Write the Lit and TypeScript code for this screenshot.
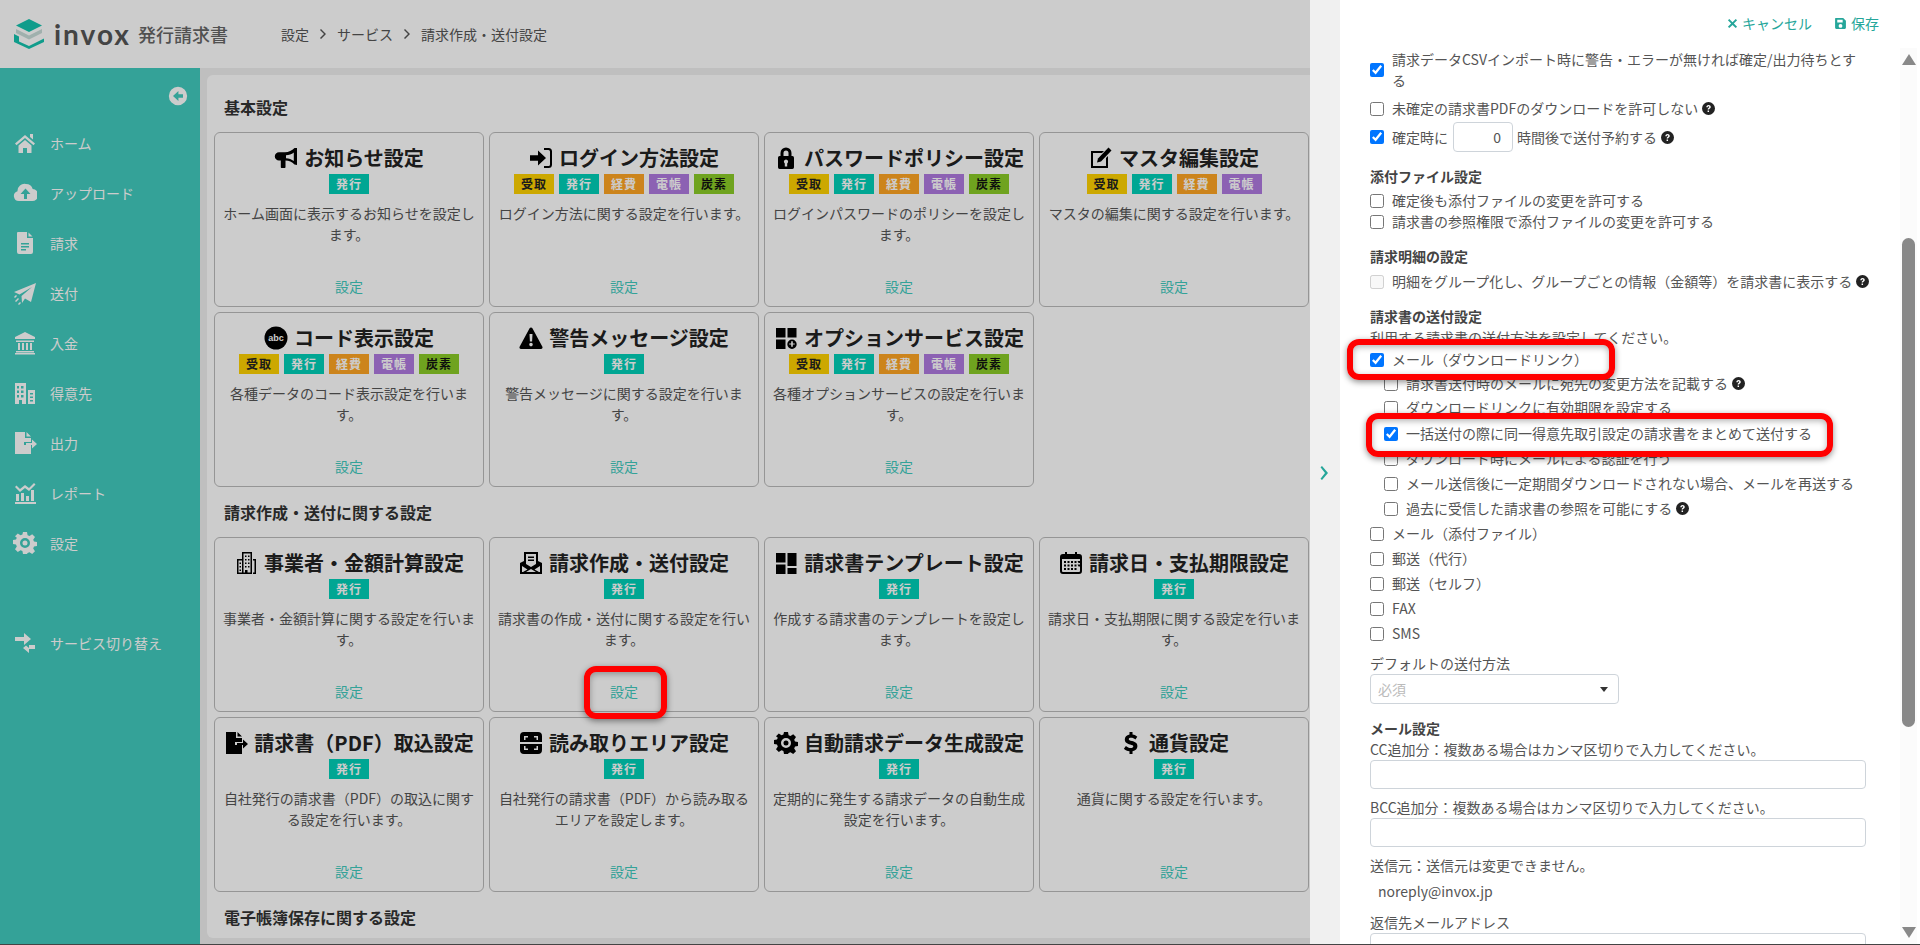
import { LitElement, html, css, svg } from "lit";
import { customElement } from "lit/decorators.js";

const P: Record<string, any> = {
  bullhorn: svg`<path fill-rule="evenodd" d="M23 2v17l-2.500-.5c-2.500-2.600-5.500-3.700-9-3.900V21c0 .6-.4 1-1 1H7.800c-.6 0-1-.4-1-1v-6.400H5a4.200 4.200 0 0 1 0-8.400h6c3.500 0 7-1.500 9.500-4.200zM19.800 6.500c-2.200 1.700-5 2.600-7.800 2.800v2.900c2.800.2 5.600 1.100 7.800 2.800z"/>`,
  signin: svg`<path d="M1 9.300h8V4.500L17 12l-8 7.500v-4.800H1z"/><path d="M15 2h4.500A3.500 3.500 0 0 1 23 5.500v13a3.500 3.500 0 0 1-3.500 3.500H15v-2h4.500a1.500 1.500 0 0 0 1.500-1.500v-13A1.500 1.500 0 0 0 19.500 4H15z"/>`,
  lock: svg`<path fill-rule="evenodd" d="M6.500 10V7a5.500 5.500 0 0 1 11 0v3h.5A1.800 1.800 0 0 1 20 11.800v9.400A1.800 1.800 0 0 1 18 23H6a1.800 1.800 0 0 1-2-1.800v-9.400A1.800 1.800 0 0 1 6 10zm3 0h5V7a2.500 2.500 0 0 0-5 0zM12 13.500a2.200 2.200 0 0 0-1.200 4v3h2.400v-3a2.200 2.200 0 0 0-1.200-4z"/>`,
  edit: svg`<path d="M2 5h13l-2 2H4v13h13v-8l2-2v12H2z"/><path d="M19.500 1.500l3 3L12 15.500l-4 1 1-4z"/>`,
  warn: svg`<path fill-rule="evenodd" d="M12 1.500c.6 0 1.100.3 1.400.8l10 18.500c.5 1-.2 2.200-1.400 2.200H2c-1.200 0-1.900-1.200-1.400-2.200l10-18.500c.3-.5.8-.8 1.400-.8zM10.500 8l.4 7.500h2.200l.4-7.500zM12 16.800a1.800 1.800 0 1 0 0 3.600 1.800 1.800 0 0 0 0-3.600z"/>`,
  option: svg`<rect x="2" y="2" width="9.500" height="9.500"/><rect x="13.500" y="2" width="9" height="9.500"/><rect x="2" y="13.500" width="9.500" height="9.500"/><path fill-rule="evenodd" d="M18 13.500a4.700 4.700 0 1 1 0 9.400 4.700 4.700 0 0 1 0-9.400zm-.8 1.800v2.100h-2v1.200h2v2.100h1.600v-2.100h2v-1.200h-2v-2.100z"/>`,
  building: svg`<path fill-rule="evenodd" d="M8 1h10v22H3V8h5zm1.500 1.500v19h1.500v-2.500h2.500v2.500h3v-19zM11 4.500h1.500V6H11zm3 0h1.500V6H14zM11 8h1.500v1.500H11zm3 0h1.500v1.500H14zm-3 3.500h1.500V13H11zm3 0h1.500V13H14zM11 15h1.500v1.500H11zm3 0h1.500v1.500H14zM4.500 9.500v12H8v-12zm1 2h1.500V13H5.500zm0 3.500h1.500v1.500H5.500zm0 3.500h1.500V20H5.500zM19 8h3v15h-3v-1.500h1.500v-12H19z"/>`,
  envelope: svg`<path fill-rule="evenodd" d="M5 1h14v9l4 2v11H1V12l4-2zm2 2v10l5 3 5-3V3zm2 2.500h6V7H9zm0 3h6V10H9zM3 15v6h18v-6l-5.500 3.500L20 21h-3l-5-3-5 3H4l4.500-2.500z"/>`,
  template: svg`<rect x="2" y="2" width="9.500" height="9.500"/><rect x="13.500" y="2" width="9" height="13"/><rect x="2" y="13.500" width="9.500" height="9.500"/><rect x="13.500" y="17" width="9" height="6"/>`,
  calendar: svg`<path fill-rule="evenodd" d="M6 1h2v2h8V1h2v2h2a3 3 0 0 1 3 3v14a3 3 0 0 1-3 3H4a3 3 0 0 1-3-3V6a3 3 0 0 1 3-3h2zM3 8v12a1 1 0 0 0 1 1h16a1 1 0 0 0 1-1V8zm2 2h2v2H5zm3.500 0h2v2h-2zm3.500 0h2v2h-2zm3.500 0h2v2h-2zm3 0H21v2h-1.500zM5 13.500h2v2H5zm3.500 0h2v2h-2zm3.500 0h2v2h-2zm3.500 0h2v2h-2zm3 0H21v2h-1.500zM5 17h2v2H5zm3.500 0h2v2h-2zm3.500 0h2v2h-2zm3.500 0h2v2h-2z"/>`,
  fileexp: svg`<path d="M2 1h10v6h6v4h-7v3h7v9H2z"/><path d="M13.500 1l4.500 4.500h-4.500zM13 12h6V8.500l5 4.500-5 4.500V14h-6z"/>`,
  scan: svg`<path fill-rule="evenodd" d="M5 1h14a4 4 0 0 1 4 4v14a4 4 0 0 1-4 4H5a4 4 0 0 1-4-4V5a4 4 0 0 1 4-4zM5 5v4h1.500V6.500H9V5zm10 0v1.500h2.500V9H19V5zM5 15v4h4v-1.500H6.500V15zm12.500 0v2.500H15V19h4v-4zM1 11v2h22v-2z"/>`,
  gear: svg`<path fill-rule="evenodd" d="M10 1h4l.6 3.200 1.900.8 2.700-1.800 2.800 2.800-1.800 2.700.8 1.900 3 .4v4l-3 .6-.8 1.900 1.800 2.700-2.800 2.800-2.700-1.800-1.900.8L14 23h-4l-.6-3-1.900-.8-2.700 1.800L2 18.200l1.800-2.700-.8-1.900-3-.6v-4l3-.4.8-1.900L2 5.300 4.800 2.500l2.700 1.800 1.900-.8zM12 7a5 5 0 1 0 0 10 5 5 0 0 0 0-10zm0 2.500a2.500 2.500 0 1 1 0 5 2.500 2.500 0 0 1 0-5z"/>`,
  home: svg`<path d="M12 4l10 8.500-1.500 1.700L12 7 3.500 14.200 2 12.500z"/><path d="M5.500 14.500L12 9l6.500 5.500V22H14v-5h-4v5H5.500z"/><path d="M17 3h3v5.500l-3-2.500z"/>`,
  cloud: svg`<path fill-rule="evenodd" d="M13 3a7 7 0 0 1 6.700 5 6 6 0 0 1-.7 12H6a5 5 0 0 1-1.500-9.800A7 7 0 0 1 13 3zm-.500 4.500L7.500 13H11v5h3v-5h3.500z"/>`,
  file: svg`<path fill-rule="evenodd" d="M5 1h9v6h6v14a2 2 0 0 1-2 2H6a2 2 0 0 1-2-2V2a1 1 0 0 1 1-1zm3 11v1.500h8V12zm0 3v1.500h8V15zm0 3v1.500h5V18zM15.500 1.500l4 4h-4z"/>`,
  plane: svg`<path d="M23 2L18 21l-6-3.500-3 4.500-.5-7L19 6 6.500 13.500 1 11z"/><path d="M2 20l3-3 1 1-3 3zM1 16l2-2 1 1-2 2zM5 23l2-2 1 1-2 2z"/>`,
  bank: svg`<path d="M12 1l10 5v2H2V6zM3 9.500h18V11H3zM5 12h2v7H5zm4 0h2v7H9zm4 0h2v7h-2zm4 0h2v7h-2zM3 20h18v1.500H3zM2 22h20v1.500H2z"/>`,
  clients: svg`<path fill-rule="evenodd" d="M2 2h11v21H9v-4H6v4H2zm2 3v2.500h2V5zm4 0v2.500h2.500V5zM4 9.500V12h2V9.500zm4 0V12h2.500V9.500zM4 14v2.500h2V14zm4 0v2.500h2.500V14zM15 9h7v14h-7zm2 3v1.500h3V12zm0 3.500V17h3v-1.500zm0 3.500v1.500h3V19z"/>`,
  chart: svg`<path d="M2 21h21v2H2zM3 13h3v7H3zm5-1h3v8H8zm5 3h3v5h-3zm5-6h3v11h-3zM2 6l1.500-1.500L7 8l5-4 4 3 5-5 1.500 1.500L16 10l-4-3-5 4z"/>`,
  swap: svg`<path d="M2 6h9V2l7 6-7 6v-4H2zM22 14v4h-6v4l-6-5 3-2.500 3 2.500v-3z"/>`,
  save: svg`<path fill-rule="evenodd" d="M3 2h14l5 5v13a2 2 0 0 1-2 2H4a2 2 0 0 1-2-2V3a1 1 0 0 1 1-1zm3 3v5h10V5zm6 8a3.500 3.500 0 1 0 0 7 3.500 3.500 0 0 0 0-7z"/>`,
  times: svg`<path d="M5 2l7 7 7-7 3 3-7 7 7 7-3 3-7-7-7 7-3-3 7-7-7-7z"/>`,
  back: svg`<path fill-rule="evenodd" d="M12 1a11 11 0 1 1 0 22 11 11 0 0 1 0-22zm.500 5L6 12l6.500 6v-4H18v-4h-5.500z"/>`,
  abc: svg`<circle cx="12" cy="12" r="11.500"/><text x="12" y="15" text-anchor="middle" font-size="9" font-family="Liberation Sans, sans-serif" fill="#fff">abc</text>`,
  dollar: svg`<path d="M10.500 1h3v2.600c2 .3 3.600 1.100 4.800 2.100l-1.900 2.700c-1.300-1-2.800-1.600-4.300-1.600-1.500 0-2.300.5-2.300 1.400 0 1 1 1.300 3.200 1.900 3 .8 5.400 2 5.400 5.100 0 2.600-1.800 4.500-4.900 5v2.800h-3v-2.700c-2.200-.3-4.300-1.300-5.600-2.600l2-2.700c1.400 1.200 3.100 2.100 4.900 2.100 1.600 0 2.500-.6 2.500-1.500 0-1-1-1.400-3.200-2-3-.8-5.300-2-5.300-5 0-2.500 1.700-4.400 4.700-5z"/>`,
};

const ic = (n: string, cls = "") =>
  html`<svg class=${cls} viewBox="0 0 24 24" fill="currentColor" aria-hidden="true">${P[n]}</svg>`;

const ALL = ["受取", "発行", "経費", "電帳", "炭素"];
const BCLS: Record<string, string> = { 受取: "b-y", 発行: "b-t", 経費: "b-o", 電帳: "b-p", 炭素: "b-g" };
const I = ["発行"];

const SECTIONS = [
  {
    title: "基本設定",
    cards: [
      ["bullhorn", "お知らせ設定", I, "ホーム画面に表示するお知らせを設定します。"],
      ["signin", "ログイン方法設定", ALL, "ログイン方法に関する設定を行います。"],
      ["lock", "パスワードポリシー設定", ALL, "ログインパスワードのポリシーを設定します。"],
      ["edit", "マスタ編集設定", ["受取", "発行", "経費", "電帳"], "マスタの編集に関する設定を行います。"],
      ["abc", "コード表示設定", ALL, "各種データのコード表示設定を行います。"],
      ["warn", "警告メッセージ設定", I, "警告メッセージに関する設定を行います。"],
      ["option", "オプションサービス設定", ALL, "各種オプションサービスの設定を行います。"],
    ],
  },
  {
    title: "請求作成・送付に関する設定",
    cards: [
      ["building", "事業者・金額計算設定", I, "事業者・金額計算に関する設定を行います。"],
      ["envelope", "請求作成・送付設定", I, "請求書の作成・送付に関する設定を行います。"],
      ["template", "請求書テンプレート設定", I, "作成する請求書のテンプレートを設定します。"],
      ["calendar", "請求日・支払期限設定", I, "請求日・支払期限に関する設定を行います。"],
      ["fileexp", "請求書（PDF）取込設定", I, "自社発行の請求書（PDF）の取込に関する設定を行います。"],
      ["scan", "読み取りエリア設定", I, "自社発行の請求書（PDF）から読み取るエリアを設定します。"],
      ["gear", "自動請求データ生成設定", I, "定期的に発生する請求データの自動生成設定を行います。"],
      ["dollar", "通貨設定", I, "通貨に関する設定を行います。"],
    ],
  },
] as const;

const NAV = [
  ["home", "ホーム"],
  ["cloud", "アップロード"],
  ["file", "請求"],
  ["plane", "送付"],
  ["bank", "入金"],
  ["clients", "得意先"],
  ["fileexp", "出力"],
  ["chart", "レポート"],
  ["gear", "設定"],
];

@customElement("app-root")
export class AppRoot extends LitElement {
  static styles = css`
    :host {
      display: flex;
      position: relative;
      width: 1920px;
      height: 945px;
      overflow: hidden;
      font-family: "Noto Sans CJK JP", "Open Sans", sans-serif;
      font-size: 14px;
      line-height: 21px;
      color: #555;
      background: #fff;
      box-sizing: border-box;
      border-bottom: 1px solid #444;
    }
    * { box-sizing: border-box; }
    .left { width: 1310px; flex: none; display: flex; flex-direction: column; position: relative; }
    .scrim { position: absolute; inset: 0; background: rgba(0, 0, 0, 0.2); z-index: 2; }
    header { height: 68px; flex: none; background: #fff; display: flex; align-items: center; padding-left: 14px; }
    .logo-mark { width: 30px; height: 30px; flex: none; }
    .logo-word { margin-left: 10px; font-family: "Lato", sans-serif; font-weight: 700; font-size: 28px; letter-spacing: 2px; color: #555; line-height: 30px; }
    .logo-sub { margin-left: 7px; font-size: 18px; color: #666; font-weight: 500; }
    .crumbs { margin-left: 53px; display: flex; align-items: center; gap: 11px; color: #555; }
    .crumbs svg { width: 6px; height: 10px; }
    .below { flex: 1; display: flex; min-height: 0; }
    .side { width: 200px; flex: none; background: #42cbbe; color: #fff; position: relative; padding-top: 50px; }
    .toggle { position: absolute; right: 12px; top: 18px; width: 20px; height: 20px; }
    .nav { display: flex; align-items: center; height: 50px; padding-left: 13px; }
    .nav svg { width: 24px; height: 24px; flex: none; }
    .nav span { margin-left: 13px; }
    .nav.switch { margin-top: 50px; }
    main { flex: 1; background: #efefef; padding: 7px 0 6px 7px; min-width: 0; }
    .sheet { height: 100%; background: #fff; border-radius: 6px 0 0 6px; padding: 0 0 0 7px; overflow: hidden; }
    h2 { margin: 0; font-size: 16px; font-weight: 700; line-height: 24px; color: #333; padding-left: 10px; }
    h2.s0 { padding-top: 20px; padding-bottom: 13px; }
    h2.s1 { padding-top: 13px; padding-bottom: 13px; }
    .grid { display: grid; grid-template-columns: repeat(4, 270px); grid-auto-rows: 175px; gap: 5px; }
    .card { border: 1px solid #bbb; border-radius: 6px; display: flex; flex-direction: column; align-items: center; padding: 9px 7px 9px; text-align: center; }
    .title { display: flex; align-items: center; justify-content: center; gap: 6px; font-size: 20px; font-weight: 700; line-height: 31px; color: #222; white-space: nowrap; height: 31px; }
    .title svg { width: 24px; height: 24px; flex: none; color: #000; }
    .badges { display: flex; gap: 5px; justify-content: center; margin-top: 1px; }
    .badge { width: 40px; height: 20px; font-size: 12px; font-weight: 700; line-height: 20px; letter-spacing: 1px; text-align: center; }
    .b-y { background: #ffd200; color: #222; }
    .b-t { background: #00d0b8; color: #fff; }
    .b-o { background: #ffa623; color: #fff; }
    .b-p { background: #af7ae0; color: #fff; }
    .b-g { background: #8bcc27; color: #111; }
    .desc { margin-top: 9px; color: #555; width: 100%; }
    .link { margin-top: auto; color: #42cbbe; }
    .strip { width: 30px; flex: none; background: #f0f0f0; display: flex; align-items: center; justify-content: center; padding-top: 1px; color: #26a69a; }
    .strip svg { width: 10px; height: 14px; }
    .panel { flex: 1; display: flex; flex-direction: column; min-width: 0; background: #fff; }
    .actions { height: 48px; flex: none; display: flex; justify-content: flex-end; align-items: flex-start; padding: 13px 41px 0 0; gap: 22px; color: #26a69a; }
    .act { display: flex; align-items: center; gap: 4px; }
    .act svg { width: 11px; height: 11px; }
    .act .sv { width: 13px; height: 13px; }
    .rest { flex: 1; display: flex; min-height: 0; }
    form { flex: 1; overflow: hidden; padding: 1px 0 0 30px; }
    .inner { width: 496px; }
    .chk { display: flex; align-items: center; white-space: nowrap; }
    .chk.wrap { white-space: normal; }
    .chk input { width: 14px; height: 14px; margin: 0 8px 0 0; flex: none; }
    .chk.sub { margin-left: 14px; }
    .q { width: 13px; height: 13px; margin-left: 4px; flex: none; }
    .hd { font-weight: 700; color: #444; }
    .m1 { margin-top: 1px; } .m3 { margin-top: 3px; } .m4 { margin-top: 4px; }
    .m5 { margin-top: 5px; } .m7 { margin-top: 7px; } .m8 { margin-top: 8px; } .m9 { margin-top: 9px; }
    .m10 { margin-top: 10px; } .m14 { margin-top: 14px; }
    .chk input.num { width: 60px; height: 30px; margin: 0 4px 0 5px; padding: 0 11px; border: 1px solid #ced4da; border-radius: 4px; text-align: right; font: inherit; color: #555; background: #fff; }
    .row3 { margin-top: 3px; height: 30px; }
    .txt { display: block; width: 100%; height: 29px; border: 1px solid #ced4da; border-radius: 4px; background: #fff; }
    .sel { width: 249px; height: 30px; border: 1px solid #ced4da; border-radius: 4px; display: flex; align-items: center; justify-content: space-between; padding: 0 10px 0 7px; color: #bbb; }
    .caret { width: 0; height: 0; border: 4px solid transparent; border-top: 5px solid #333; border-bottom: 0; }
    .addr { padding-left: 8px; }
    .bar { width: 17px; flex: none; margin-right: 3px; background: #fbfbfb; position: relative; display: flex; flex-direction: column; align-items: center; }
    .up, .down { width: 0; height: 0; border-left: 7px solid transparent; border-right: 7px solid transparent; }
    .up { border-bottom: 11px solid #888; margin-top: 6px; }
    .down { border-top: 11px solid #888; margin-top: auto; margin-bottom: 6px; }
    .thumb { width: 13px; height: 489px; margin-top: 173px; background: #888; border-radius: 7px; }
    .mark { position: absolute; border: 6px solid #f00; border-radius: 12px; box-shadow: 0 2px 6px rgba(0, 0, 0, 0.45), inset 0 2px 6px rgba(0, 0, 0, 0.3); z-index: 5; pointer-events: none; }
    .mark.a { left: 584px; top: 666px; width: 83px; height: 53px; }
    .mark.b { left: 1347px; top: 339px; width: 268px; height: 41px; }
    .mark.c { left: 1366px; top: 413px; width: 467px; height: 44px; }
  `;

  private card(c: readonly any[]) {
    return html`<div class="card">
      <div class="title">${ic(c[0])}<span>${c[1]}</span></div>
      <div class="badges">${c[2].map((b: string) => html`<div class="badge ${BCLS[b]}">${b}</div>`)}</div>
      <div class="desc">${c[3]}</div>
      <div class="link">設定</div>
    </div>`;
  }

  private chk(label: string, opts: { on?: boolean; q?: boolean; sub?: boolean; m?: string; dis?: boolean } = {}) {
    return html`<label class="chk ${opts.sub ? "sub" : ""} ${opts.m ?? ""}">
      <input type="checkbox" .checked=${!!opts.on} ?disabled=${opts.dis} /><span>${label}</span>${opts.q ? this.q() : ""}
    </label>`;
  }

  private q() {
    return html`<svg class="q" viewBox="0 0 24 24" aria-hidden="true"><circle cx="12" cy="12" r="12" fill="#222"/><path d="M8 9.500C8 7 10 5.500 12.200 5.500c2.300 0 4 1.500 4 3.500 0 3-3.200 2.800-3.200 5h-2.600c0-3.500 3-3.300 3-5 0-.7-.5-1.200-1.300-1.200-.9 0-1.400.6-1.500 1.700zM10.300 15.500H13V18.300H10.300z" fill="#fff"/></svg>`;
  }

  render() {
    return html`
      <div class="left">
        <header>
          <svg class="logo-mark" viewBox="0 0 30 30" aria-hidden="true">
            <path d="M15 0l13 6.500L15 13 2 6.500z" fill="#14c4ae"/>
            <path d="M2 10l13 6.500L28 10v4L15 20.500 2 14z" fill="#c9ddd9"/>
            <path d="M0 15l5 2.500v5l10 4.500 15-7.500V23L15 30 0 23z" fill="#14c4ae"/>
          </svg>
          <span class="logo-word">invox</span>
          <span class="logo-sub">発行請求書</span>
          <nav class="crumbs">
            <span>設定</span>
            <svg viewBox="0 0 6 10"><path d="M1 0l5 5-5 5-1-1 4-4-4-4z" fill="#555"/></svg>
            <span>サービス</span>
            <svg viewBox="0 0 6 10"><path d="M1 0l5 5-5 5-1-1 4-4-4-4z" fill="#555"/></svg>
            <span>請求作成・送付設定</span>
          </nav>
        </header>
        <div class="below">
          <aside class="side">
            ${ic("back", "toggle")}
            ${NAV.map(([i, t]) => html`<div class="nav">${ic(i)}<span>${t}</span></div>`)}
            <div class="nav switch">${ic("swap")}<span>サービス切り替え</span></div>
          </aside>
          <main>
            <div class="sheet">
              ${SECTIONS.map(
                (s, n) => html`<h2 class="s${n}">${s.title}</h2>
                  <div class="grid">${s.cards.map((c) => this.card(c))}</div>`
              )}
              <h2 class="s1">電子帳簿保存に関する設定</h2>
            </div>
          </main>
        </div>
        <div class="scrim"></div>
      </div>
      <div class="strip">
        <svg viewBox="0 0 10 14"><path d="M2 0l6 7-6 7-1.500-1.300L5 7 .5 1.300z" fill="currentColor"/></svg>
      </div>
      <section class="panel">
        <div class="actions">
          <div class="act">${ic("times")}<span>キャンセル</span></div>
          <div class="act">${ic("save", "sv")}<span>保存</span></div>
        </div>
        <div class="rest">
          <form>
            <div class="inner">
              ${this.chk("請求データCSVインポート時に警告・エラーが無ければ確定/出力待ちとする", { on: true, m: "wrap" })}
              ${this.chk("未確定の請求書PDFのダウンロードを許可しない", { q: true, m: "m7" })}
              <div class="chk row3">
                <input type="checkbox" checked /><span>確定時に</span>
                <input class="num" type="text" value="0" /><span>時間後で送付予約する</span>${this.q()}
              </div>
              <div class="hd m14">添付ファイル設定</div>
              ${this.chk("確定後も添付ファイルの変更を許可する", { m: "m3" })}
              ${this.chk("請求書の参照権限で添付ファイルの変更を許可する")}
              <div class="hd m14">請求明細の設定</div>
              ${this.chk("明細をグループ化し、グループごとの情報（金額等）を請求書に表示する", { q: true, dis: true, m: "m4" })}
              <div class="hd m14">請求書の送付設定</div>
              <div>利用する請求書の送付方法を設定してください。</div>
              ${this.chk("メール（ダウンロードリンク）", { on: true, m: "m1" })}
              ${this.chk("請求書送付時のメールに宛先の変更方法を記載する", { q: true, sub: true, m: "m3" })}
              ${this.chk("ダウンロードリンクに有効期限を設定する", { sub: true, m: "m3" })}
              ${this.chk("一括送付の際に同一得意先取引設定の請求書をまとめて送付する", { on: true, sub: true, m: "m5" })}
              ${this.chk("ダウンロード時にメールによる認証を行う", { sub: true, m: "m4" })}
              ${this.chk("メール送信後に一定期間ダウンロードされない場合、メールを再送する", { sub: true, m: "m4" })}
              ${this.chk("過去に受信した請求書の参照を可能にする", { q: true, sub: true, m: "m4" })}
              ${this.chk("メール（添付ファイル）", { m: "m4" })}
              ${this.chk("郵送（代行）", { m: "m4" })}
              ${this.chk("郵送（セルフ）", { m: "m4" })}
              ${this.chk("FAX", { m: "m4" })}
              ${this.chk("SMS", { m: "m4" })}
              <div class="m9">デフォルトの送付方法</div>
              <div class="sel"><span>必須</span><i class="caret"></i></div>
              <div class="hd m14">メール設定</div>
              <div>CC追加分：複数ある場合はカンマ区切りで入力してください。</div>
              <input class="txt" type="text" />
              <div class="m8">BCC追加分：複数ある場合はカンマ区切りで入力してください。</div>
              <input class="txt" type="text" />
              <div class="m8">送信元：送信元は変更できません。</div>
              <div class="addr m5">noreply@invox.jp</div>
              <div class="m10">返信先メールアドレス</div>
              <input class="txt" type="text" />
            </div>
          </form>
          <div class="bar">
            <div class="up"></div>
            <div class="thumb"></div>
            <div class="down"></div>
          </div>
        </div>
      </section>
      <div class="mark a"></div>
      <div class="mark b"></div>
      <div class="mark c"></div>
    `;
  }
}
